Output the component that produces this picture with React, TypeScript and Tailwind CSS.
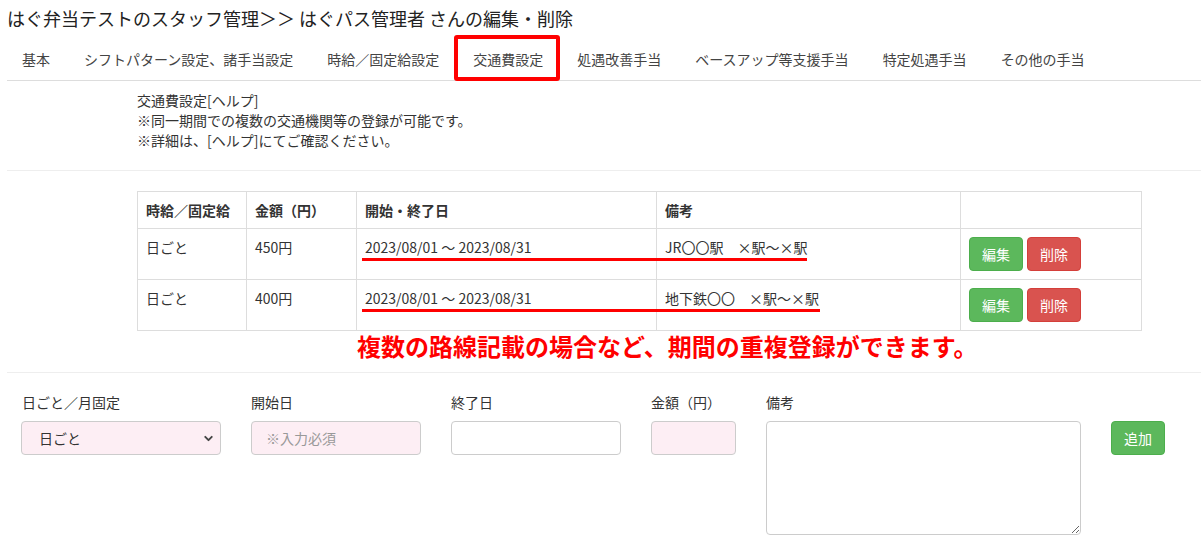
import { ChevronDown } from 'lucide-react'

const tabs = [
  '基本',
  'シフトパターン設定、諸手当設定',
  '時給／固定給設定',
  '交通費設定',
  '処遇改善手当',
  'ベースアップ等支援手当',
  '特定処遇手当',
  'その他の手当',
]

const rows = [
  { type: '日ごと', amount: '450円', period: '2023/08/01 ～ 2023/08/31', note: 'JR〇〇駅　×駅～×駅' },
  { type: '日ごと', amount: '400円', period: '2023/08/01 ～ 2023/08/31', note: '地下鉄〇〇　×駅～×駅' },
]

export default function App() {
  return (
    <div className="w-[1201px] h-[554px] overflow-hidden bg-white text-[#333] font-['Noto_Sans_CJK_JP','Noto_Sans',sans-serif]">
      <h1 className="pl-[7px] pt-[5px] text-[18px] leading-[26px] text-[#222]">
        はぐ弁当テストのスタッフ管理＞＞ はぐパス管理者 さんの編集・削除
      </h1>

      {/* タブ */}
      <ul className="mt-[7px] ml-[7px] flex border-b border-[#ddd]">
        {tabs.map((t, i) => (
          <li key={t} className="relative mr-[4px]">
            <span className="block px-[15px] py-[11px] text-[14px] leading-[20px] text-[#444] whitespace-nowrap">
              {t}
            </span>
            {i === 3 && (
              <div className="absolute -top-[3px] -bottom-[1px] -left-[4px] -right-[2px] border-4 border-[#ff0000] rounded-[3px]" />
            )}
          </li>
        ))}
      </ul>

      {/* 説明 */}
      <div className="ml-[7px] border-b border-[#eee] pt-[9px] pb-[20px] pl-[130px] text-[14px] leading-[20px]">
        <p>交通費設定[ヘルプ]</p>
        <p>※同一期間での複数の交通機関等の登録が可能です。</p>
        <p>※詳細は、[ヘルプ]にてご確認ください。</p>
      </div>

      {/* 一覧 */}
      <div className="ml-[7px] border-b border-[#eee] pt-[20px] pb-[11px] pl-[130px]">
        <div className="relative w-[1004px]">
          <table className="w-[1004px] table-fixed border-collapse text-[14px] leading-[20px]">
            <thead>
              <tr>
                <th className="w-[109px] border border-[#ddd] px-[8px] py-[8px] text-left font-bold">時給／固定給</th>
                <th className="w-[110px] border border-[#ddd] px-[8px] py-[8px] text-left font-bold">金額（円）</th>
                <th className="w-[300px] border border-[#ddd] px-[8px] py-[8px] text-left font-bold">開始・終了日</th>
                <th className="w-[304px] border border-[#ddd] px-[8px] py-[8px] text-left font-bold">備考</th>
                <th className="w-[181px] border border-[#ddd] px-[8px] py-[8px]"></th>
              </tr>
            </thead>
            <tbody>
              {rows.map((r, i) => (
                <tr key={i}>
                  <td className="border border-[#ddd] px-[8px] py-[8px] align-top">{r.type}</td>
                  <td className="border border-[#ddd] px-[8px] py-[8px] align-top">{r.amount}</td>
                  <td className="border border-[#ddd] px-[8px] py-[8px] align-top whitespace-nowrap">{r.period}</td>
                  <td className="border border-[#ddd] px-[8px] py-[8px] align-top whitespace-nowrap">{r.note}</td>
                  <td className="border border-[#ddd] px-[8px] py-[8px] align-top">
                    <div className="flex gap-[4px]">
                      <button className="h-[34px] rounded-[4px] border border-[#4cae4c] bg-[#5cb85c] px-[12px] text-[14px] text-white">
                        編集
                      </button>
                      <button className="h-[34px] rounded-[4px] border border-[#d43f3a] bg-[#d9534f] px-[12px] text-[14px] text-white">
                        削除
                      </button>
                    </div>
                  </td>
                </tr>
              ))}
            </tbody>
          </table>
          {/* 赤線 */}
          <div className="absolute left-[225px] top-[67px] h-[3px] w-[445px] bg-[#ff0000]" />
          <div className="absolute left-[225px] top-[118px] h-[3px] w-[458px] bg-[#ff0000]" />
        </div>
        <p className="ml-[220px] text-[24px] leading-[30px] font-bold text-[#ff0000]">
          複数の路線記載の場合など、期間の重複登録ができます。
        </p>
      </div>

      {/* 入力フォーム */}
      <div className="flex gap-[30px] pl-[21px] pt-[19px] text-[14px] leading-[20px]">
        <div className="w-[200px]">
          <label className="block mb-[9px] pl-[1px]">日ごと／月固定</label>
          <div className="relative h-[34px] rounded-[4px] border border-[#ccc] bg-[#fdeef4]">
            <span className="absolute left-[17px] top-[6px]">日ごと</span>
            <ChevronDown size={13} strokeWidth={3.5} className="absolute right-[5px] top-[10px] text-[#444]" />
          </div>
        </div>
        <div className="w-[170px]">
          <label className="block mb-[9px]">開始日</label>
          <div className="h-[34px] rounded-[4px] border border-[#ccc] bg-[#fdeef4] px-[14px] py-[6px] text-[#999]">
            ※入力必須
          </div>
        </div>
        <div className="w-[170px]">
          <label className="block mb-[9px]">終了日</label>
          <div className="h-[34px] rounded-[4px] border border-[#ccc] bg-white" />
        </div>
        <div className="w-[85px]">
          <label className="block mb-[9px]">金額（円）</label>
          <div className="h-[34px] rounded-[4px] border border-[#ccc] bg-[#fdeef4]" />
        </div>
        <div className="w-[315px]">
          <label className="block mb-[9px]">備考</label>
          <textarea className="block h-[114px] w-[315px] rounded-[4px] border border-[#ccc] bg-white" />
        </div>
        <div className="pt-[29px]">
          <button className="h-[34px] rounded-[4px] border border-[#4cae4c] bg-[#5cb85c] px-[12px] text-[14px] text-white">
            追加
          </button>
        </div>
      </div>
    </div>
  )
}
